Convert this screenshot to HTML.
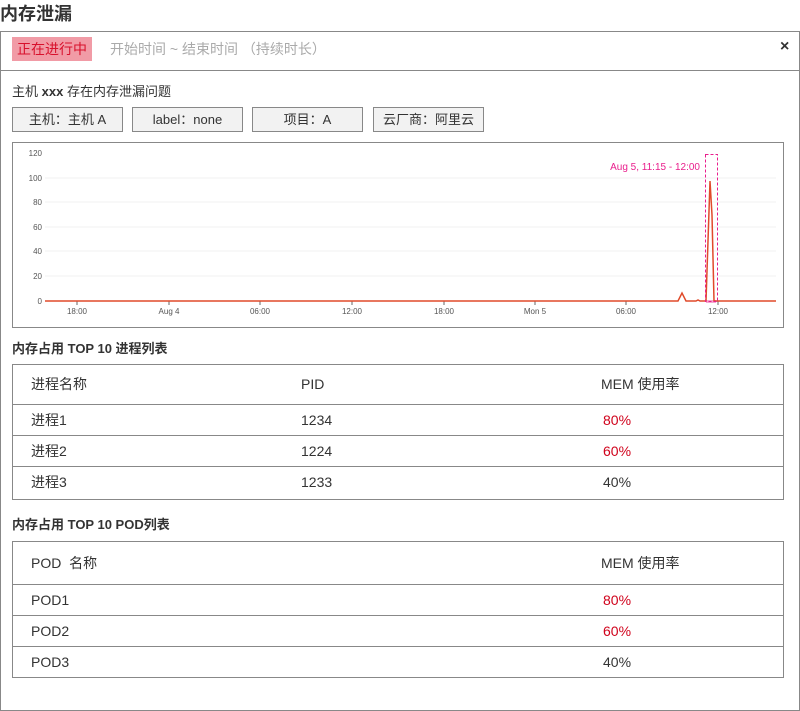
<!DOCTYPE html><html><head><meta charset="utf-8"><style>
*{margin:0;padding:0;box-sizing:border-box}
body{width:800px;height:711px;background:#fff;font-family:"Liberation Sans","Noto Sans CJK SC",sans-serif;color:#333;position:relative;overflow:hidden}
.a{position:absolute;white-space:nowrap}
.tag{position:absolute;top:107px;height:25px;background:#f2f2f2;border:1px solid #888;font-size:13px;text-align:center;line-height:23px}
.tb{position:absolute;left:12px;width:772px;border:1px solid #888}
.row{position:absolute;left:0;right:0;border-top:1px solid #888;font-size:14px}
.row span{position:absolute}
.r{color:#d0021b}
</style></head><body>
<div class="a" style="left:0;top:0;font-size:18px;font-weight:bold;color:#333">内存泄漏</div>
<div class="a" style="left:0;top:31px;width:800px;height:680px;border:1px solid #888"></div>
<div class="a" style="left:0;top:70px;width:800px;height:1px;background:#888"></div>
<div class="a" style="left:12px;top:37px;width:80px;height:24px;background:#f19ba6;color:#d8102c;font-size:14px;line-height:24px;text-align:center">正在进行中</div>
<div class="a" style="left:110px;top:39px;font-size:14px;color:#aaa">开始时间 ~ 结束时间 （持续时长）</div>
<div class="a" style="left:780px;top:38px;font-size:16px;font-weight:bold;color:#333">×</div>
<div class="a" style="left:12px;top:81px;font-size:13px">主机 <b>xxx</b> 存在内存泄漏问题</div>
<div class="tag" style="left:12px;width:111px">主机：主机 A</div>
<div class="tag" style="left:132px;width:111px">label：none</div>
<div class="tag" style="left:252px;width:111px">项目：A</div>
<div class="tag" style="left:373px;width:111px">云厂商：阿里云</div>
<svg class="a" style="left:12px;top:142px" width="772" height="186" viewBox="12 142 772 186">
<rect x="12.5" y="142.5" width="771" height="185" fill="#fff" stroke="#888"/>
<g stroke="#f2f2f2"><line x1="45" x2="776" y1="178" y2="178"/><line x1="45" x2="776" y1="202" y2="202"/><line x1="45" x2="776" y1="227" y2="227"/><line x1="45" x2="776" y1="251" y2="251"/><line x1="45" x2="776" y1="276" y2="276"/></g>
<g font-size="8" fill="#555" text-anchor="end" font-family="Liberation Sans,sans-serif"><text x="42" y="156">120</text><text x="42" y="181">100</text><text x="42" y="205">80</text><text x="42" y="230">60</text><text x="42" y="254">40</text><text x="42" y="279">20</text><text x="42" y="304">0</text></g>
<g font-size="8" fill="#555" text-anchor="middle" font-family="Liberation Sans,sans-serif"><text x="77" y="314">18:00</text><text x="169" y="314">Aug 4</text><text x="260" y="314">06:00</text><text x="352" y="314">12:00</text><text x="444" y="314">18:00</text><text x="535" y="314">Mon 5</text><text x="626" y="314">06:00</text><text x="718" y="314">12:00</text></g>
<g stroke="#666"><line x1="77" x2="77" y1="301" y2="305"/><line x1="169" x2="169" y1="301" y2="305"/><line x1="260" x2="260" y1="301" y2="305"/><line x1="352" x2="352" y1="301" y2="305"/><line x1="444" x2="444" y1="301" y2="305"/><line x1="535" x2="535" y1="301" y2="305"/><line x1="626" x2="626" y1="301" y2="305"/><line x1="718" x2="718" y1="301" y2="305"/></g>
<rect x="706" y="300" width="10" height="3" fill="#f4a6d0"/>
<polyline fill="none" stroke="#e04a2a" stroke-width="1.5" points="45,301 678,301 682,293 686,301 696,301 698,300 700,301 706,301 710,181 712,215 714,301 776,301"/>
<rect x="705.5" y="154.5" width="12" height="147" fill="none" stroke="#e91e8c" stroke-dasharray="3,2"/>
<text x="700" y="170" font-size="10" fill="#e91e8c" text-anchor="end" font-family="Liberation Sans,sans-serif">Aug 5, 11:15 - 12:00</text>
</svg>
<div class="a" style="left:12px;top:338px;font-size:13px;font-weight:bold">内存占用 TOP 10 进程列表</div>
<div class="tb" style="top:364px;height:136px">
<div class="row" style="top:-1px;border:0;height:40px"><span style="left:18px;top:10px">进程名称</span><span style="left:288px;top:12px">PID</span><span style="left:588px;top:10px">MEM 使用率</span></div>
<div class="row" style="top:39px;height:31px"><span style="left:18px;top:5px">进程1</span><span style="left:288px;top:7px">1234</span><span class="r" style="left:590px;top:7px">80%</span></div>
<div class="row" style="top:70px;height:31px"><span style="left:18px;top:5px">进程2</span><span style="left:288px;top:7px">1224</span><span class="r" style="left:590px;top:7px">60%</span></div>
<div class="row" style="top:101px;height:33px"><span style="left:18px;top:5px">进程3</span><span style="left:288px;top:7px">1233</span><span style="left:590px;top:7px">40%</span></div>
</div>
<div class="a" style="left:12px;top:514px;font-size:13px;font-weight:bold">内存占用 TOP 10 POD列表</div>
<div class="tb" style="top:541px;height:137px">
<div class="row" style="top:-1px;border:0;height:43px"><span style="left:18px;top:12px">POD &nbsp;名称</span><span style="left:588px;top:12px">MEM 使用率</span></div>
<div class="row" style="top:42px;height:31px"><span style="left:18px;top:7px">POD1</span><span class="r" style="left:590px;top:7px">80%</span></div>
<div class="row" style="top:73px;height:31px"><span style="left:18px;top:7px">POD2</span><span class="r" style="left:590px;top:7px">60%</span></div>
<div class="row" style="top:104px;height:31px"><span style="left:18px;top:7px">POD3</span><span style="left:590px;top:7px">40%</span></div>
</div>
</body></html>
